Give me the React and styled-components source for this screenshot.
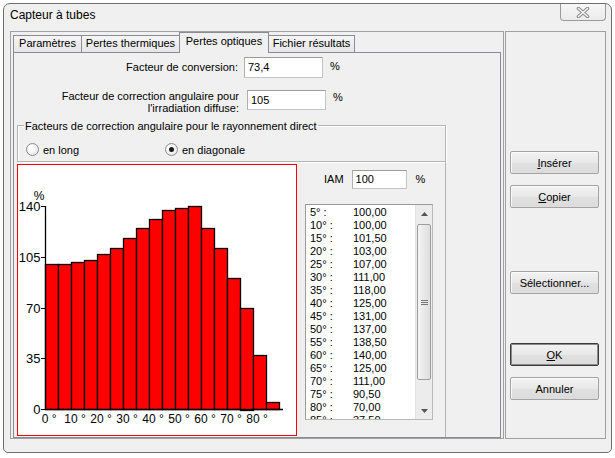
import React from 'react';
import styled, { createGlobalStyle } from 'styled-components';

const GlobalStyle = createGlobalStyle`
  html, body {
    margin: 0;
    padding: 0;
    background: #ffffff;
  }
  body {
    font-family: "Liberation Sans", Arial, sans-serif;
    font-size: 11px;
    color: #000;
  }
`;

const Screen = styled.div`
  width: 615px;
  height: 458px;
  overflow: hidden;
  padding: 3px 0 0 3px;
  box-sizing: border-box;
`;

const Window = styled.div`
  width: 609px;
  height: 450px;
  box-sizing: border-box;
  border: 1px solid #6e6e6e;
  border-radius: 7px 7px 5px 5px;
  background: #f0f0f0;
  display: flex;
  flex-direction: column;
`;

const TitleBar = styled.div`
  height: 27px;
  display: flex;
  justify-content: space-between;
  align-items: flex-start;
`;

const Title = styled.div`
  padding: 4px 0 0 6px;
  font-size: 12px;
  line-height: 15px;
`;

const CloseBtn = styled.div`
  width: 46px;
  height: 17px;
  margin-right: 5px;
  box-sizing: border-box;
  border: 1px solid #9a9a9a;
  border-top: none;
  border-radius: 0 0 4px 4px;
  background: linear-gradient(#f7f7f7, #ebebeb);
  display: flex;
  align-items: center;
  justify-content: center;
`;

const Client = styled.div`
  display: flex;
  gap: 1px;
  padding: 0 4px 0 6px;
  height: 408px;
`;

const LeftBox = styled.div`
  width: 494px;
  height: 408px;
  box-sizing: border-box;
  border: 1px solid #a0a0a0;
  padding: 3px 1px 0 2px;
  display: flex;
  flex-direction: column;
`;

const TabStrip = styled.div`
  display: flex;
  align-items: flex-end;
  height: 17px;
  position: relative;
  z-index: 1;
`;

const Tab = styled.div`
  width: ${p => p.$w}px;
  height: ${p => (p.$active ? 21 : 17)}px;
  margin-left: ${p => (p.$first ? 0 : -1)}px;
  margin-bottom: ${p => (p.$active ? -1 : 0)}px;
  box-sizing: border-box;
  border: 1px solid #898c95;
  border-bottom: none;
  background: ${p => (p.$active ? '#f0f0f0' : 'linear-gradient(#f5f5f5, #e6e6e6)')};
  position: relative;
  z-index: ${p => (p.$active ? 2 : 1)};
  text-align: center;
  font-size: 11px;
  line-height: ${p => (p.$active ? 17 : 15)}px;
  white-space: nowrap;
`;

const TabPage = styled.div`
  width: 488px;
  height: 386px;
  box-sizing: border-box;
  border: 1px solid #898c95;
  background: #f0f0f0;
  display: flex;
  flex-direction: column;
`;

const FieldRow = styled.div`
  display: flex;
  align-items: flex-start;
  margin-top: ${p => p.$mt}px;
`;

const FieldLabel = styled.div`
  width: ${p => p.$w}px;
  text-align: right;
  line-height: ${p => p.$lh}px;
`;

const TextBox = styled.div`
  width: ${p => p.$w}px;
  height: ${p => p.$h}px;
  margin-left: ${p => p.$ml}px;
  box-sizing: border-box;
  background: #fff;
  border: 1px solid #c4c4c4;
  border-top-color: #9c9c9c;
  border-left-color: #b0b0b0;
  padding-left: 3px;
  line-height: ${p => p.$h - 2}px;
  font-size: 11px;
`;

const Unit = styled.div`
  margin-left: ${p => p.$ml}px;
  margin-top: ${p => p.$mt}px;
  line-height: 13px;
`;

const GroupBox = styled.div`
  margin: 11px 0 0 3px;
  width: 429px;
  height: 37px;
  box-sizing: border-box;
  border: 1px solid #b4b4b4;
  box-shadow: inset 1px 1px 0 #fff, 1px 1px 0 #fff;
`;

const Legend = styled.div`
  display: inline-block;
  margin: -6px 0 0 6px;
  padding: 0 1px;
  background: #f0f0f0;
  line-height: 13px;
  vertical-align: top;
`;

const RadioRow = styled.div`
  display: flex;
  align-items: center;
  padding-left: 8px;
  margin-top: 5px;
`;

const RadioOption = styled.div`
  display: flex;
  align-items: center;
  width: ${p => p.$w}px;
  gap: 4px;
`;

const RadioCircle = styled.div`
  width: 13px;
  height: 13px;
  box-sizing: border-box;
  border-radius: 50%;
  border: 1px solid #8c8c8c;
  background: radial-gradient(circle at 40% 40%, #ffffff 20%, #dcdcdc 100%);
  display: flex;
  align-items: center;
  justify-content: center;
  &::after {
    content: '';
    display: ${p => (p.$checked ? 'block' : 'none')};
    width: 5px;
    height: 5px;
    border-radius: 50%;
    background: #1a1a1a;
  }
`;

const LowerFrame = styled.div`
  flex: 1;
  width: 432px;
  box-sizing: border-box;
  border-right: 1px solid #b4b4b4;
  display: flex;
  align-items: flex-start;
`;

const ChartBox = styled.div`
  margin: 2px 0 0 3px;
  width: 280px;
  height: 272px;
  box-sizing: border-box;
  border: 1px solid #ff0000;
  background: #fff;
`;

const RightCol = styled.div`
  display: flex;
  flex-direction: column;
`;

const IamRow = styled.div`
  display: flex;
  align-items: flex-start;
  margin: 8px 0 0 27px;
`;

const IamLabel = styled.div`
  line-height: 19px;
`;

const ListBox = styled.div`
  margin: 15px 0 0 8px;
  width: 128px;
  height: 216px;
  box-sizing: border-box;
  border: 1px solid #b8b8b8;
  border-top-color: #9a9a9a;
  border-left-color: #9a9a9a;
  background: #fff;
  display: flex;
`;

const ListItems = styled.div`
  flex: 1;
  overflow: hidden;
  padding: 1px 0 0 4px;
`;

const ListItem = styled.div`
  display: flex;
  height: 13px;
  line-height: 13px;
  white-space: nowrap;
`;

const ItemKey = styled.span`
  width: 43px;
`;

const ScrollBar = styled.div`
  width: 17px;
  display: flex;
  flex-direction: column;
  background: #ececec;
  border-left: 1px solid #e2e2e2;
  box-sizing: border-box;
`;

const ScrollArrow = styled.div`
  height: 17px;
  display: flex;
  align-items: center;
  justify-content: center;
`;

const ScrollTrack = styled.div`
  flex: 1;
  padding-top: 2px;
`;

const ScrollThumb = styled.div`
  height: 156px;
  box-sizing: border-box;
  margin: 0 1px;
  border: 1px solid #9c9c9c;
  border-radius: 2px;
  background: linear-gradient(90deg, #f4f4f4, #dedede);
  display: flex;
  align-items: center;
  justify-content: center;
`;

const RightBox = styled.div`
  width: 101px;
  height: 408px;
  box-sizing: border-box;
  border: 1px solid #a0a0a0;
  display: flex;
  flex-direction: column;
  align-items: flex-start;
  padding-left: 4px;
`;

const Button = styled.div`
  width: 89px;
  height: 23px;
  margin-top: ${p => p.$mt}px;
  box-sizing: border-box;
  border: 1px solid ${p => (p.$default ? '#3a3a3a' : '#a3a3a3')};
  border-radius: 2px;
  background: linear-gradient(#f3f3f3, #e8e8e8 50%, #e0e0e0 51%, #dcdcdc);
  box-shadow: ${p => (p.$default ? 'inset 0 0 0 1px #8a8a8a' : 'inset 1px 1px 0 #fbfbfb')};
  display: flex;
  align-items: center;
  justify-content: center;
  font-size: 11px;
  u { text-decoration: underline; }
`;

const bars = [100, 100, 101.5, 103, 107, 111, 118, 125, 131, 137, 138.5, 140, 125, 111, 90.5, 70, 37.5, 5];
const listRows = [
  [5, '100,00'], [10, '100,00'], [15, '101,50'], [20, '103,00'], [25, '107,00'],
  [30, '111,00'], [35, '118,00'], [40, '125,00'], [45, '131,00'], [50, '137,00'],
  [55, '138,50'], [60, '140,00'], [65, '125,00'], [70, '111,00'], [75, '90,50'],
  [80, '70,00'], [85, '37,50'], [90, '5,00'],
];

function Chart() {
  const x0 = 27, y0 = 244, k = 203 / 140, bw = 13;
  const yTicks = [0, 35, 70, 105, 140];
  const xTicks = [0, 10, 20, 30, 40, 50, 60, 70, 80];
  return (
    <svg width="278" height="270" style={{ display: 'block' }}>
      {bars.map((v, i) => (
        <rect
          key={i}
          x={x0 + i * bw + 0.5}
          y={Math.round(y0 - v * k) + 0.5}
          width={bw}
          height={Math.round(v * k)}
          fill="#ff0000"
          stroke="#000"
          strokeWidth="1.3"
        />
      ))}
      <line x1={x0 + 0.5} y1={41} x2={x0 + 0.5} y2={y0} stroke="#000" strokeWidth="1.3" />
      <line x1={x0} y1={y0 + 0.5} x2={265} y2={y0 + 0.5} stroke="#000" strokeWidth="1.3" />
      {yTicks.map(t => {
        const y = Math.round(y0 - t * k) + 0.5;
        return (
          <g key={t}>
            <line x1={23} y1={y} x2={x0} y2={y} stroke="#000" />
            <text x={22.5} y={y} dy="0.36em" textAnchor="end" fontSize="13" fontFamily="Liberation Sans, Arial, sans-serif">{t}</text>
          </g>
        );
      })}
      <text x={21} y={35} textAnchor="middle" fontSize="12" fontFamily="Liberation Sans, Arial, sans-serif">%</text>
      {xTicks.map((t, i) => {
        const tx = x0 + i * 2 * bw;
        const w = String(t).length * 6.7;
        return (
          <text key={t} x={tx - w / 2} y={258} fontSize="12" fontFamily="Liberation Sans, Arial, sans-serif">{`${t} °`}</text>
        );
      })}
    </svg>
  );
}

export default function App() {
  return (
    <Screen>
      <GlobalStyle />
      <Window>
        <TitleBar>
          <Title>Capteur à tubes</Title>
          <CloseBtn>
            <svg width="14" height="11" viewBox="0 0 14 11">
              <path d="M2.5 1.5 L11.5 9.5 M11.5 1.5 L2.5 9.5" stroke="#8a8a8a" strokeWidth="3.6" strokeLinecap="round" fill="none" />
              <path d="M2.5 1.5 L11.5 9.5 M11.5 1.5 L2.5 9.5" stroke="#f4f4f4" strokeWidth="1.6" strokeLinecap="round" fill="none" />
            </svg>
          </CloseBtn>
        </TitleBar>
        <Client>
          <LeftBox>
            <TabStrip>
              <Tab $w={69} $first>Paramètres</Tab>
              <Tab $w={99}>Pertes thermiques</Tab>
              <Tab $w={90} $active>Pertes optiques</Tab>
              <Tab $w={87}>Fichier résultats</Tab>
            </TabStrip>
            <TabPage>
              <FieldRow $mt={4}>
                <FieldLabel $w={224} $lh={21}>Facteur de conversion:</FieldLabel>
                <TextBox $w={79} $h={21} $ml={6}>73,4</TextBox>
                <Unit $ml={7} $mt={3}>%</Unit>
              </FieldRow>
              <FieldRow $mt={12}>
                <FieldLabel $w={225} $lh={12}>
                  Facteur de correction angulaire pour
                  <br />
                  l'irradiation diffuse:
                </FieldLabel>
                <TextBox $w={79} $h={20} $ml={8}>105</TextBox>
                <Unit $ml={7} $mt={1}>%</Unit>
              </FieldRow>
              <GroupBox>
                <Legend>Facteurs de correction angulaire pour le rayonnement direct</Legend>
                <RadioRow>
                  <RadioOption $w={139}>
                    <RadioCircle />
                    <span>en long</span>
                  </RadioOption>
                  <RadioOption $w={120}>
                    <RadioCircle $checked />
                    <span>en diagonale</span>
                  </RadioOption>
                </RadioRow>
              </GroupBox>
              <LowerFrame>
                <ChartBox>
                  <Chart />
                </ChartBox>
                <RightCol>
                  <IamRow>
                    <IamLabel>IAM</IamLabel>
                    <TextBox $w={55} $h={19} $ml={8}>100</TextBox>
                    <Unit $ml={9} $mt={3}>%</Unit>
                  </IamRow>
                  <ListBox>
                    <ListItems>
                      {listRows.map(([a, v]) => (
                        <ListItem key={a}>
                          <ItemKey>{`${a}° :`}</ItemKey>
                          <span>{v}</span>
                        </ListItem>
                      ))}
                    </ListItems>
                    <ScrollBar>
                      <ScrollArrow>
                        <svg width="7" height="4" viewBox="0 0 7 4"><path d="M0 4 L3.5 0 L7 4 Z" fill="#555" /></svg>
                      </ScrollArrow>
                      <ScrollTrack>
                        <ScrollThumb>
                          <svg width="7" height="7" viewBox="0 0 7 7">
                            <path d="M0 1.5 H7 M0 3.5 H7 M0 5.5 H7" stroke="#777" strokeWidth="1" />
                          </svg>
                        </ScrollThumb>
                      </ScrollTrack>
                      <ScrollArrow>
                        <svg width="7" height="4" viewBox="0 0 7 4"><path d="M0 0 L3.5 4 L7 0 Z" fill="#555" /></svg>
                      </ScrollArrow>
                    </ScrollBar>
                  </ListBox>
                </RightCol>
              </LowerFrame>
            </TabPage>
          </LeftBox>
          <RightBox>
            <Button $mt={119}><span><u>I</u>nsérer</span></Button>
            <Button $mt={11}><span><u>C</u>opier</span></Button>
            <Button $mt={63}>Sélectionner...</Button>
            <Button $mt={49} $default><span><u>O</u>K</span></Button>
            <Button $mt={11}>Annuler</Button>
          </RightBox>
        </Client>
      </Window>
    </Screen>
  );
}
